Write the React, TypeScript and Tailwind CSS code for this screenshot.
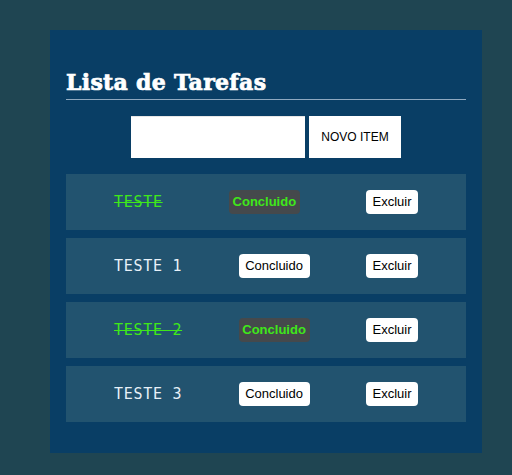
import { useState } from "react";

interface ITarefa {
    id: number;
    nome: string;
    feito: boolean;
}

const inicial: ITarefa[] = [
    { id: 1, nome: "TESTE", feito: true },
    { id: 2, nome: "TESTE 1", feito: false },
    { id: 3, nome: "TESTE 2", feito: true },
    { id: 4, nome: "TESTE 3", feito: false },
];

const ItemTarefa = ({ tarefa, toggle, remover }: { tarefa: ITarefa; toggle: () => void; remover: () => void }) => {
    return (
        <div className="bg-[#22536f] h-[56px] flex flex-row justify-between items-center px-12">
            <p className={
                tarefa.feito
                ? "text-[#3fe81a] line-through font-['DejaVu_Sans_Mono',monospace] text-[15px] tracking-[0.7px] whitespace-pre"
                : "text-[#e8f1f8] font-['DejaVu_Sans_Mono',monospace] text-[15px] tracking-[0.7px] whitespace-pre"
            }>{tarefa.nome}</p>
            <button onClick={toggle} className={
                tarefa.feito
                ? "bg-[#45494c] text-[#3fe81a] font-bold h-6 w-[71px] rounded-sm text-[13px] font-['Liberation_Sans',sans-serif]"
                : "bg-white text-black h-6 w-[71px] rounded-sm text-[13px] font-['Liberation_Sans',sans-serif]"
            }>
                Concluido
            </button>
            <button onClick={remover} className="bg-white text-black h-6 w-[52px] rounded-sm text-[13px] font-['Liberation_Sans',sans-serif]">
                Excluir
            </button>
        </div>
    )
}

export default function App() {
    const [tarefas, setTarefas] = useState<ITarefa[]>(inicial)
    const [texto, setTexto] = useState<string>("")

    const adicionar = () => {
        if (!texto.trim()) return
        setTarefas([...tarefas, { id: Date.now(), nome: texto, feito: false }])
        setTexto("")
    }

    return (
        <div className="bg-[#1f4552] min-h-[475px] w-full pt-[30px] pl-[50px]">
            <div className="bg-[#093e65] w-[432px] h-[423px] px-4 pt-[37px]">
                <h1 className="text-white font-['DejaVu_Serif',serif] font-bold text-[22px] tracking-[0.3px] [-webkit-text-stroke:0.7px_white] leading-[30px] pb-[2px] border-b border-[#8fa9c0]">
                    Lista de Tarefas
                </h1>
                <div className="flex flex-row justify-center gap-1 mt-[16px]">
                    <input value={texto} onChange={(e) => setTexto(e.target.value)} className="bg-white w-[174px] h-[42px] px-2 outline-none border-t border-[#e6e6e6]" />
                    <button onClick={adicionar} className="bg-white w-[92px] h-[42px] text-[12px] text-black font-['Liberation_Sans',sans-serif]">
                        NOVO ITEM
                    </button>
                </div>
                <div className="flex flex-col gap-2 mt-4">
                    {tarefas.map((t) => (
                        <ItemTarefa
                            key={t.id}
                            tarefa={t}
                            toggle={() => setTarefas(tarefas.map((x) => x.id === t.id ? { ...x, feito: !x.feito } : x))}
                            remover={() => setTarefas(tarefas.filter((x) => x.id !== t.id))}
                        />
                    ))}
                </div>
            </div>
        </div>
    )
}
